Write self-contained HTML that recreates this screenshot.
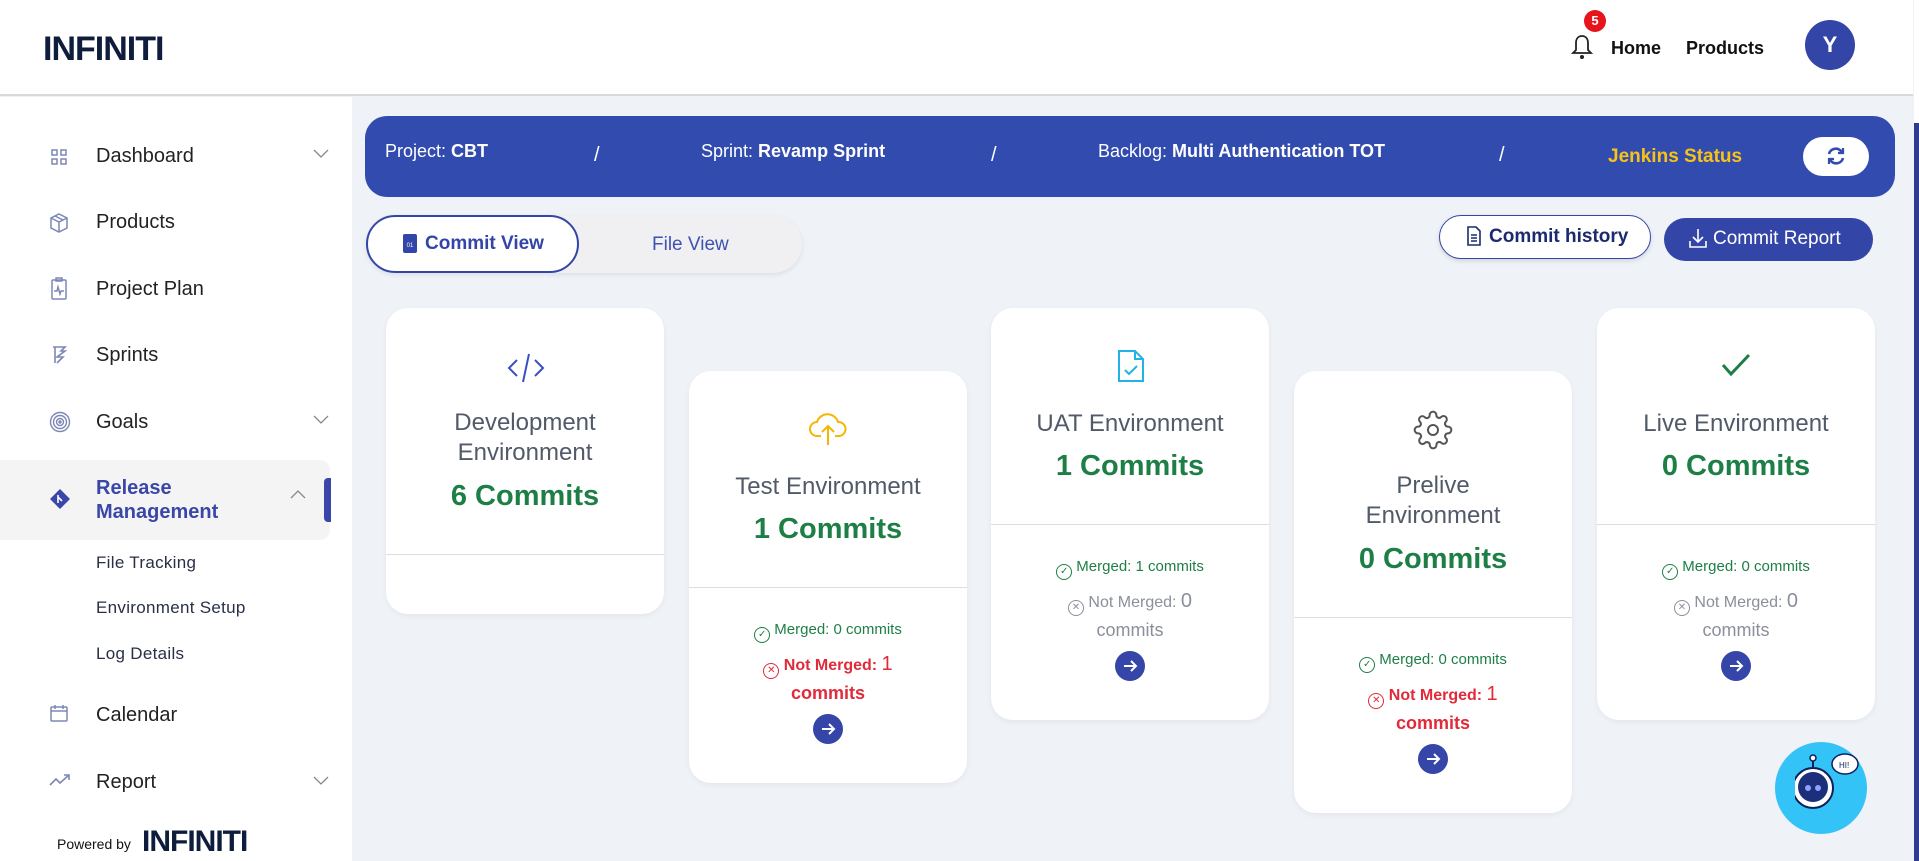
<!DOCTYPE html>
<html><head><meta charset="utf-8">
<style>
*{margin:0;padding:0;box-sizing:border-box}
body{width:1919px;height:861px;overflow:hidden;background:#eff2f7;font-family:"Liberation Sans",Arial,sans-serif;position:relative}
.abs{position:absolute}
.hdr{left:0;top:0;width:1913px;height:96px;background:#fff;border-bottom:2px solid #d9d9d9}
.logo{left:43px;top:30px;font-weight:bold;font-size:34px;color:#0f1d3d;letter-spacing:-1px}
.side{left:0;top:97px;width:352px;height:764px;background:#fff}
.si{position:absolute;left:96px;font-size:20px;color:#222;line-height:24px}
.ic{position:absolute;left:49px}
.sub{position:absolute;left:96px;font-size:17px;color:#2a2f45;letter-spacing:.3px}
.chev{position:absolute;left:313px}
.banner{left:365px;top:116px;width:1530px;height:81px;background:#324bae;border-radius:22px;color:#fff;font-size:18px}
.banner .t{position:absolute;top:25px}
.card{position:absolute;width:278px;background:#fff;border-radius:22px;box-shadow:0 2px 6px rgba(0,0,0,.05)}
.l{position:absolute;left:0;right:0;text-align:center}
.tt{font-size:24px;color:#525a69;line-height:30px}
.cm{font-size:29px;color:#1d7f45;font-weight:bold;line-height:34px}
.sep{position:absolute;left:0;right:0;height:1px;background:#dedede}
.mg{font-size:15px;color:#1d7f45;line-height:20px}
.nm{font-size:16px;color:#e12a3a;font-weight:bold;line-height:22px}
.nmg{font-size:16px;color:#8a8f99;line-height:22px}
.arr{position:absolute;left:124px;width:30px;height:30px;border-radius:50%;background:#3545a8}
.ck{display:inline-block;width:16px;height:16px;border-radius:50%;font-size:10px;line-height:13px;vertical-align:-3px;font-weight:normal}
</style></head><body>

<div class="abs hdr"></div>
<div class="abs logo">INFINITI</div>
<svg class="abs" style="left:1571px;top:33px" width="22" height="28" viewBox="0 0 22 28"><path d="M11 3c-4 0-6 3-6 7v7l-3 3h18l-3-3v-7c0-4-2-7-6-7z" fill="none" stroke="#222" stroke-width="1.8"/><circle cx="11" cy="24" r="2" fill="#222"/></svg>
<div class="abs" style="left:1584px;top:10px;width:22px;height:22px;border-radius:50%;background:#e8141c;color:#fff;font-size:13px;font-weight:bold;text-align:center;line-height:22px">5</div>
<div class="abs" style="left:1611px;top:38px;font-size:18px;font-weight:bold;color:#111">Home</div>
<div class="abs" style="left:1686px;top:38px;font-size:18px;font-weight:bold;color:#111">Products</div>
<div class="abs" style="left:1805px;top:20px;width:50px;height:50px;border-radius:50%;background:#3445a8;color:#fff;font-size:22px;font-weight:bold;text-align:center;line-height:50px">Y</div>
<div class="abs" style="left:1914px;top:0;width:5px;height:861px;background:#fff"></div>
<div class="abs" style="left:1914px;top:123px;width:5px;height:738px;background:#2e3b8f"></div>

<div class="abs side">
<svg class="ic" style="top:50px" width="20" height="20" viewBox="0 0 20 20" fill="none" stroke="#7d87b5" stroke-width="1.5"><rect x="3" y="3" width="5" height="5"/><rect x="12" y="3" width="5" height="5"/><rect x="3" y="12" width="5" height="5"/><rect x="12" y="12" width="5" height="5"/></svg>
<div class="si" style="top:47px">Dashboard</div>
<svg class="chev" style="top:52px" width="16" height="10"><path d="M1 1l7 7 7-7" fill="none" stroke="#888" stroke-width="1.3"/></svg>
<svg class="ic" style="top:115px" width="20" height="22" viewBox="0 0 20 22" fill="none" stroke="#7d87b5" stroke-width="1.5"><path d="M10 2l8 4v10l-8 4-8-4V6z M2 6l8 4 8-4 M10 10v10 M6 4l8 4"/></svg>
<div class="si" style="top:113px">Products</div>
<svg class="ic" style="top:180px" width="20" height="24" viewBox="0 0 20 24" fill="none" stroke="#7d87b5" stroke-width="1.5"><rect x="3" y="3" width="14" height="19" rx="1"/><rect x="7" y="1" width="6" height="3"/><path d="M5 14h3l1-4 2 7 1-3h3"/></svg>
<div class="si" style="top:180px">Project Plan</div>
<svg class="ic" style="top:247px" width="20" height="22" viewBox="0 0 20 22" fill="none" stroke="#7d87b5" stroke-width="1.6"><path d="M4 3h12l-4 4h4l-8 6h6l-6 6 M6 3v16"/></svg>
<div class="si" style="top:246px">Sprints</div>
<svg class="ic" style="top:314px" width="22" height="22" viewBox="0 0 22 22" fill="none" stroke="#7d87b5" stroke-width="1.4"><circle cx="11" cy="11" r="9.5"/><circle cx="11" cy="11" r="6.5"/><circle cx="11" cy="11" r="3.5"/><circle cx="11" cy="11" r="1" fill="#7d87b5"/></svg>
<div class="si" style="top:313px">Goals</div>
<svg class="chev" style="top:318px" width="16" height="10"><path d="M1 1l7 7 7-7" fill="none" stroke="#888" stroke-width="1.3"/></svg>
<div class="abs" style="left:0;top:363px;width:330px;height:80px;background:#f4f4f5;border-radius:0 10px 10px 0"></div>
<div class="abs" style="left:324px;top:381px;width:7px;height:44px;background:#3a47a8;border-radius:4px 0 0 4px"></div>
<svg class="ic" style="top:391px" width="22" height="22" viewBox="0 0 22 22"><path d="M11 1l10 10-10 10L1 11z" fill="#3a47a8"/><path d="M9 7v8 M9 9l4 4" stroke="#fff" stroke-width="1.6" fill="none"/></svg>
<div class="si" style="top:379px;color:#3a47a8;font-weight:bold;line-height:24px">Release<br>Management</div>
<svg class="chev" style="top:392px;left:290px" width="16" height="10"><path d="M1 9l7-7 7 7" fill="none" stroke="#888" stroke-width="1.3"/></svg>
<div class="sub" style="top:456px">File Tracking</div>
<div class="sub" style="top:501px">Environment Setup</div>
<div class="sub" style="top:547px">Log Details</div>
<svg class="ic" style="top:606px" width="20" height="20" viewBox="0 0 20 20" fill="none" stroke="#7d87b5" stroke-width="1.5"><rect x="2" y="4" width="16" height="14" rx="1"/><path d="M2 8h16 M6 2v4 M14 2v4"/></svg>
<div class="si" style="top:606px">Calendar</div>
<svg class="ic" style="top:676px" width="22" height="14" viewBox="0 0 22 14" fill="none" stroke="#7d87b5" stroke-width="1.6"><path d="M1 12l6-6 4 4 9-8 M15 2h5v5"/></svg>
<div class="si" style="top:673px">Report</div>
<svg class="chev" style="top:679px" width="16" height="10"><path d="M1 1l7 7 7-7" fill="none" stroke="#888" stroke-width="1.3"/></svg>
<div class="abs" style="left:57px;top:739px;font-size:14px;color:#111">Powered by</div>
<div class="abs" style="left:142px;top:728px;font-size:30px;font-weight:bold;color:#0f1d3d;letter-spacing:-1px">INFINITI</div>
</div>

<div class="abs banner">
<div class="t" style="left:20px">Project: <b>CBT</b></div>
<div class="t" style="left:229px;top:28px;font-size:20px">/</div>
<div class="t" style="left:336px">Sprint: <b>Revamp Sprint</b></div>
<div class="t" style="left:626px;top:28px;font-size:20px">/</div>
<div class="t" style="left:733px">Backlog: <b>Multi Authentication TOT</b></div>
<div class="t" style="left:1134px;top:28px;font-size:20px">/</div>
<div class="t" style="left:1243px;top:30px;color:#f7c316;font-weight:bold;font-size:19px">Jenkins Status</div>
<div class="abs" style="left:1438px;top:21px;width:66px;height:39px;background:#fff;border-radius:20px"></div>
<svg class="abs" style="left:1460px;top:29px" width="22" height="22" viewBox="0 0 22 22" fill="none" stroke="#324bae" stroke-width="2.6"><path d="M4 9a7 7 0 0 1 12-3l2 2 M18 13a7 7 0 0 1-12 3l-2-2"/><path d="M18 3v5h-5 M4 19v-5h5" stroke-width="2.2"/></svg>
</div>

<div class="abs" style="left:366px;top:215px;width:436px;height:58px;background:#f0f0f2;border-radius:29px;box-shadow:0 2px 5px rgba(0,0,0,.08)"></div>
<div class="abs" style="left:366px;top:215px;width:213px;height:58px;background:#fff;border:2px solid #3445a8;border-radius:29px"></div>
<div class="abs" style="left:403px;top:234px;width:14px;height:19px;background:#3445a8;border-radius:2px;color:#fff;font-size:6px;text-align:center;padding-top:9px">01</div>
<div class="abs" style="left:425px;top:233px;font-size:19px;color:#3445a8;font-weight:bold">Commit View</div>
<div class="abs" style="left:652px;top:234px;font-size:19px;color:#3e52b0">File View</div>

<div class="abs" style="left:1439px;top:215px;width:212px;height:44px;background:#fff;border:1.5px solid #3445a8;border-radius:22px;box-shadow:0 2px 5px rgba(0,0,0,.12)"></div>
<svg class="abs" style="left:1467px;top:226px" width="14" height="20" viewBox="0 0 14 20" fill="none" stroke="#1c2a6e" stroke-width="1.6"><path d="M1 1h8l4 4v14H1z M4 9h6 M4 12h6 M4 15h6"/></svg>
<div class="abs" style="left:1489px;top:226px;font-size:19px;color:#1c2a6e;font-weight:bold">Commit history</div>
<div class="abs" style="left:1664px;top:218px;width:209px;height:43px;background:#3445a8;border-radius:22px"></div>
<svg class="abs" style="left:1688px;top:227px" width="20" height="22" viewBox="0 0 20 22" fill="none" stroke="#fff" stroke-width="1.6"><path d="M10 2v13 M5 10l5 5 5-5 M2 14v6h16v-6"/></svg>
<div class="abs" style="left:1713px;top:228px;font-size:19px;color:#fff">Commit Report</div>

<div class="card" style="left:386px;top:308px;height:306px">
<svg class="abs" style="left:121px;top:44px" width="38" height="32" viewBox="0 0 38 32" fill="none" stroke="#3a4fc0" stroke-width="2"><path d="M10 8l-8 8 8 8 M28 8l8 8-8 8 M22 2l-6 28"/></svg>
<div class="l tt" style="top:100px">Development<br>Environment</div>
<div class="l cm" style="top:171px">6 Commits</div>
<div class="sep" style="top:246px"></div>
</div>

<div class="card" style="left:689px;top:371px;height:412px">
<svg class="abs" style="left:119px;top:38px" width="40" height="38" viewBox="0 0 40 38" fill="none" stroke="#f6b500" stroke-width="2"><path d="M13 27H9a7 7 0 0 1 0-14 11 11 0 0 1 21 0 7 7 0 0 1 1 14h-4 M20 36V17 M14 23l6-6 6 6"/></svg>
<div class="l tt" style="top:101px">Test Environment</div>
<div class="l cm" style="top:141px">1 Commits</div>
<div class="sep" style="top:216px"></div>
<div class="l mg" style="top:249px"><span class="ck" style="border:1.3px solid #1d7f45">✓</span> Merged: 0 commits</div>
<div class="l nm" style="top:282px"><span class="ck" style="border:1.3px solid #e12a3a">✕</span> Not Merged: <span style="font-size:20px;font-weight:normal">1</span></div>
<div class="l nm" style="top:311px;font-size:18px">commits</div>
<div class="arr" style="top:343px"><svg width="30" height="30"><path d="M9 15h12 M16 10l5 5-5 5" stroke="#fff" stroke-width="2" fill="none"/></svg></div>
</div>

<div class="card" style="left:991px;top:308px;height:412px">
<svg class="abs" style="left:125px;top:40px" width="30" height="36" viewBox="0 0 30 36" fill="none" stroke="#22b3e6" stroke-width="2"><path d="M3 3h16l8 8v22H3z M19 3v8h8 M9 22l4 4 8-8"/></svg>
<div class="l tt" style="top:101px">UAT Environment</div>
<div class="l cm" style="top:141px">1 Commits</div>
<div class="sep" style="top:216px"></div>
<div class="l mg" style="top:249px"><span class="ck" style="border:1.3px solid #1d7f45">✓</span> Merged: 1 commits</div>
<div class="l nmg" style="top:282px"><span class="ck" style="border:1.3px solid #8a8f99">✕</span> Not Merged: <span style="font-size:20px">0</span></div>
<div class="l nmg" style="top:311px;font-size:18px">commits</div>
<div class="arr" style="top:343px"><svg width="30" height="30"><path d="M9 15h12 M16 10l5 5-5 5" stroke="#fff" stroke-width="2" fill="none"/></svg></div>
</div>

<div class="card" style="left:1294px;top:371px;height:442px">
<svg class="abs" style="left:119px;top:39px" width="40" height="40" viewBox="0 0 24 24" fill="none" stroke="#555" stroke-width="1.2"><circle cx="12" cy="12" r="3"/><path d="M19.4 15a1.65 1.65 0 0 0 .33 1.820l.06.06a2 2 0 1 1-2.830 2.830l-.06-.06a1.650 1.650 0 0 0-1.820-.33 1.650 1.650 0 0 0-1 1.510V21a2 2 0 1 1-4 0v-.09A1.650 1.650 0 0 0 9 19.4a1.650 1.650 0 0 0-1.820.33l-.06.06a2 2 0 1 1-2.830-2.830l.06-.06A1.650 1.650 0 0 0 4.680 15a1.650 1.650 0 0 0-1.510-1H3a2 2 0 1 1 0-4h.09A1.650 1.650 0 0 0 4.600 9a1.650 1.650 0 0 0-.33-1.820l-.06-.06a2 2 0 1 1 2.830-2.830l.06.06A1.650 1.650 0 0 0 9 4.680a1.650 1.650 0 0 0 1-1.510V3a2 2 0 1 1 4 0v.09a1.650 1.650 0 0 0 1 1.510 1.650 1.650 0 0 0 1.820-.33l.06-.06a2 2 0 1 1 2.830 2.830l-.06.06A1.650 1.650 0 0 0 19.4 9a1.650 1.650 0 0 0 1.510 1H21a2 2 0 1 1 0 4h-.09a1.650 1.650 0 0 0-1.510 1z"/></svg>
<div class="l tt" style="top:100px">Prelive<br>Environment</div>
<div class="l cm" style="top:171px">0 Commits</div>
<div class="sep" style="top:246px"></div>
<div class="l mg" style="top:279px"><span class="ck" style="border:1.3px solid #1d7f45">✓</span> Merged: 0 commits</div>
<div class="l nm" style="top:312px"><span class="ck" style="border:1.3px solid #e12a3a">✕</span> Not Merged: <span style="font-size:20px;font-weight:normal">1</span></div>
<div class="l nm" style="top:341px;font-size:18px">commits</div>
<div class="arr" style="top:373px"><svg width="30" height="30"><path d="M9 15h12 M16 10l5 5-5 5" stroke="#fff" stroke-width="2" fill="none"/></svg></div>
</div>

<div class="card" style="left:1597px;top:308px;height:412px">
<svg class="abs" style="left:124px;top:45px" width="30" height="24" viewBox="0 0 30 24" fill="none" stroke="#1d7f45" stroke-width="3"><path d="M2 12l8 9L28 2"/></svg>
<div class="l tt" style="top:101px">Live Environment</div>
<div class="l cm" style="top:141px">0 Commits</div>
<div class="sep" style="top:216px"></div>
<div class="l mg" style="top:249px"><span class="ck" style="border:1.3px solid #1d7f45">✓</span> Merged: 0 commits</div>
<div class="l nmg" style="top:282px"><span class="ck" style="border:1.3px solid #8a8f99">✕</span> Not Merged: <span style="font-size:20px">0</span></div>
<div class="l nmg" style="top:311px;font-size:18px">commits</div>
<div class="arr" style="top:343px"><svg width="30" height="30"><path d="M9 15h12 M16 10l5 5-5 5" stroke="#fff" stroke-width="2" fill="none"/></svg></div>
</div>

<div class="abs" style="left:1775px;top:742px;width:92px;height:92px;border-radius:50%;background:#34c3f7"></div>
<svg class="abs" style="left:1795px;top:752px" width="80" height="72" viewBox="0 0 80 72"><circle cx="18" cy="6" r="3" fill="#fff" stroke="#0d1f5c" stroke-width="1.5"/><path d="M18 9v6" stroke="#0d1f5c" stroke-width="2"/><circle cx="18" cy="36" r="20" fill="#fff" stroke="#0d1f5c" stroke-width="2"/><circle cx="18" cy="35" r="15" fill="#1c2f7a"/><circle cx="13" cy="36" r="3" fill="#8fa0ff"/><circle cx="23" cy="36" r="3" fill="#8fa0ff"/><ellipse cx="50" cy="12" rx="13" ry="10" fill="#fff" stroke="#0d1f5c" stroke-width="1.5"/><text x="44" y="16" font-size="8" font-family="Liberation Sans" fill="#0d1f5c">HI!</text></svg>
</body></html>
